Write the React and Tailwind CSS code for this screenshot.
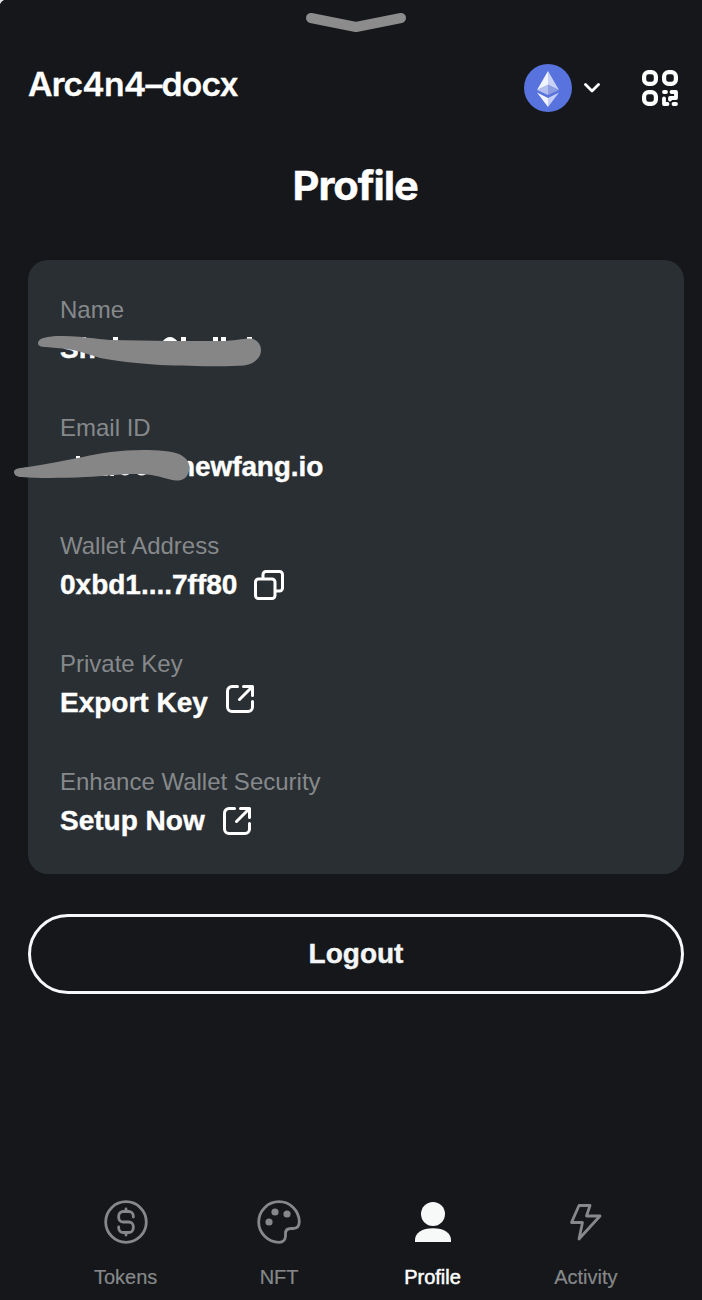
import React from "react";

function ExportIcon() {
  return (
    <svg width="28" height="28" viewBox="0 0 28 28" fill="none" stroke="#fff" strokeWidth="3" strokeLinecap="round" strokeLinejoin="round">
      <path d="M11.5 1.5H6a4.5 4.5 0 0 0-4.5 4.5V22A4.5 4.5 0 0 0 6 26.5H22A4.5 4.5 0 0 0 26.500 22V16.500" />
      <path d="M17.500 1.500H26.500V10.500M26 2L13.500 14.500" />
    </svg>
  );
}

function Field({ label, children }) {
  return (
    <div className="relative flex h-[118px] shrink-0 flex-col">
      <span className="text-[24px] leading-[32px] text-[#86898b]">{label}</span>
      <div className="mt-[6px] flex h-[34px] items-center text-[28px] leading-[34px] font-bold whitespace-pre text-white [-webkit-text-stroke:0.4px_#fff]">
        {children}
      </div>
    </div>
  );
}

function NavItem({ label, active, children }) {
  return (
    <div className="flex w-[153.4px] flex-col items-center">
      <div className="flex h-[44px] items-center justify-center">{children}</div>
      <span className={active ? "mt-[21px] text-[20px] leading-[24px] text-white [-webkit-text-stroke:0.5px_#fff]" : "mt-[21px] text-[20px] leading-[24px] text-[#86888a] [-webkit-text-stroke:0.2px_#86888a]"}>{label}</span>
    </div>
  );
}

export default function App() {
  return (
    <div className="relative flex h-[1300px] w-[702px] flex-col overflow-hidden bg-[#15171a] font-['Liberation_Sans',sans-serif]">
      <svg className="absolute top-0 left-0" width="5" height="5" viewBox="0 0 5 5">
        <path d="M0 0H4Q1.500 1 0 4Z" fill="#e4e6e8" />
      </svg>
      <div className="flex h-[36px] justify-center pt-[12px] pl-[10px]">
        <svg width="102" height="21" viewBox="0 0 102 21" fill="none" stroke="#8c8c8d" strokeWidth="10" strokeLinecap="round" strokeLinejoin="round">
          <path d="M6 6L51 15L96 6" />
        </svg>
      </div>
      <header className="flex h-[104px] items-center pr-[23px] pl-[28px]">
        <h1 className="mt-[-6px] flex-1 origin-left scale-x-[1.055] font-['Inter',sans-serif] text-[32px] leading-[40px] font-semibold tracking-[-0.8px] text-white [-webkit-text-stroke:0.3px_#fff]">Arc4n4–docx</h1>
        <svg width="48" height="48" viewBox="0 0 48 48">
          <circle cx="24" cy="24" r="24" fill="#5872de" />
          <path d="M24 7V21L13 26Z" fill="#f1f4ff" />
          <path d="M24 7L35 26L24 21Z" fill="#c9d2f6" />
          <path d="M13 26L24 20.500V31Z" fill="#b3bfee" />
          <path d="M24 20.500L35 26L24 31Z" fill="#8d9de2" />
          <path d="M13 28.500L24 34V43Z" fill="#f1f4ff" />
          <path d="M35 28.500L24 34V43Z" fill="#c3cdf5" />
        </svg>
        <svg className="ml-[12px]" width="16" height="10" viewBox="0 0 16 10" fill="none" stroke="#fff" strokeWidth="2.800" strokeLinecap="round" strokeLinejoin="round">
          <path d="M1.500 1.500L8 8L14.500 1.500" />
        </svg>
        <svg className="ml-[41px]" width="38" height="38" viewBox="0 0 38 38" fill="none" stroke="#fff" strokeWidth="4.200">
          <rect x="3.100" y="3.100" width="11.800" height="11.800" rx="4.500" />
          <rect x="23.100" y="3.100" width="11.800" height="11.800" rx="4.500" />
          <rect x="3.100" y="23.100" width="11.800" height="11.800" rx="4.500" />
          <path d="M23 23H25M30.500 23H35V29H29V30.500M23 29.500V35H26.500M32.500 35H35" strokeWidth="3.800" strokeLinecap="round" strokeLinejoin="round" />
        </svg>
      </header>
      <h2 className="flex h-[120px] scale-x-[1.04] items-start justify-center pt-[22px] pl-[8px] font-['Inter',sans-serif] text-[40px] leading-[48px] font-bold tracking-[-1px] text-white [-webkit-text-stroke:0.4px_#fff]">Profile</h2>
      <section className="relative ml-[28px] flex h-[614px] w-[656px] flex-col rounded-[20px] bg-[#2a2f33] pt-[34px] pl-[32px]">
        <Field label="Name">
          <span>Sh</span>
          <svg className="absolute top-[26px] left-[-24px]" width="228" height="48" viewBox="36 320 228 48">
            <path d="M81 337h5v4h-5zM113 337h5v5h-5zM181 337h5v5h-5zM213 337h5v5h-5zM221 337h5v5h-5zM247 337h5v4h-5zM162 342Q170 332 178 342Z" fill="#fff" />
            <path d="M38 343C38 338 48 336 60 336C78 335.500 95 339 110 340C150 341 190 341 220 341C235 341 242 338.500 250 338.500C257 339 261 344 261 350C261 358 254 364 244 365.500C225 367 190 366 160 365C135 363 115 361 100 358C90 355 80 351 70 349.500C60 348 52 347.500 46 347C41 347 38 346 38 343Z" fill="#868686" />
          </svg>
        </Field>
        <Field label="Email ID">
          <span className="ml-[118px] tracking-[-0.1px]">newfang.io</span>
          <svg className="absolute top-[30px] left-[-48px]" width="180" height="46" viewBox="12 442 180 46">
            <path d="M76 456h4v5h-4z" fill="#fff" />
            <path d="M63 472Q69 481 75 472ZM77 471h4v5h-4zM87 471h4v5h-4zM93 472Q98 479 104 472l4 4h-5zM110 471h4v5h-4zM118 471Q125 480 132 471ZM134 471Q142 480 149 471Z" fill="#fff" />
            <path d="M14 472C14 468 20 468 28 467C50 464 65 460 83 457C100 453 120 450 143 450C158 450 172 451 180 454.500C187 458 189.500 463 189.500 468C189 475 185 480 179 480.500C168 481 160 474.500 140 474C125 473.500 105 476 85 477C65 478 40 478.500 22 477C17 477 14 475 14 472Z" fill="#868686" />
          </svg>
        </Field>
        <Field label="Wallet Address">
          <span>0xbd1....7ff80</span>
          <svg className="ml-[17px]" width="30" height="30" viewBox="0 0 30 30" fill="none" stroke="#fff" strokeWidth="3" strokeLinejoin="round">
            <rect x="1.500" y="9" width="19.500" height="19.500" rx="3" />
            <path d="M9 9V4.500A3 3 0 0 1 12 1.500H25.500A3 3 0 0 1 28.500 4.500V18A3 3 0 0 1 25.500 21H21" />
          </svg>
        </Field>
        <Field label="Private Key">
          <span>Export Key</span>
          <span className="mt-[-8px] ml-[18px]"><ExportIcon /></span>
        </Field>
        <Field label="Enhance Wallet Security">
          <span>Setup Now</span>
          <span className="ml-[18px]"><ExportIcon /></span>
        </Field>
      </section>
      <button className="mt-[40px] ml-[28px] flex h-[80px] w-[656px] shrink-0 items-center justify-center rounded-full border-[3px] border-[#f7f8f9] text-[28px] leading-[34px] font-bold text-[#f4f5f7] [-webkit-text-stroke:0.4px_#f4f5f7]">Logout</button>
      <nav className="mt-[206px] ml-[49px] flex">
        <NavItem label="Tokens">
          <svg width="44" height="44" viewBox="0 0 44 44" fill="none" stroke="#86888a" strokeWidth="2.800" strokeLinecap="round" strokeLinejoin="round">
            <circle cx="22" cy="22" r="20.300" />
            <path d="M29.300 17V15.800A4.500 4.500 0 0 0 24.800 11.500H19.200A4.500 4.500 0 0 0 14.700 16V17.500A4.500 4.500 0 0 0 19.200 22H24.800A4.500 4.500 0 0 1 29.300 26.500V28A4.500 4.500 0 0 1 24.800 32.500H19.200A4.500 4.500 0 0 1 14.700 28V27M22 9V11.500M22 32.500V35" />
          </svg>
        </NavItem>
        <NavItem label="NFT">
          <svg width="44" height="44" viewBox="0 0 44 44" fill="none" stroke="#86888a" strokeWidth="2.800" strokeLinejoin="round">
            <path d="M22 1.700A20.300 20.300 0 0 0 1.700 22C1.700 33 11 42.300 22 42.300C26.500 42.300 28.500 39 28.500 36V33.500C28.500 30 31 28.500 34 28.500H36C40 28.500 42.300 26 42.300 21.500C42 10.500 33 1.700 22 1.700Z" />
            <g fill="#86888a" stroke="none">
              <circle cx="12" cy="22" r="3.600" />
              <circle cx="18" cy="12" r="3.600" />
              <circle cx="30" cy="14" r="3.600" />
            </g>
          </svg>
        </NavItem>
        <NavItem label="Profile" active>
          <svg width="44" height="44" viewBox="-1 0 44 44" fill="#f7f8f8">
            <circle cx="22" cy="14" r="12" />
            <path d="M4 42V40C4 33 11 28.300 22 28.300S40 33 40 40V42Z" />
          </svg>
        </NavItem>
        <NavItem label="Activity">
          <svg width="44" height="44" viewBox="0 0 44 44" fill="none" stroke="#86888a" strokeWidth="2.800" strokeLinejoin="round">
            <path d="M15 5.500H26L22.500 16H36L15 39L18.500 22.500H7.500Z" />
          </svg>
        </NavItem>
      </nav>
    </div>
  );
}
